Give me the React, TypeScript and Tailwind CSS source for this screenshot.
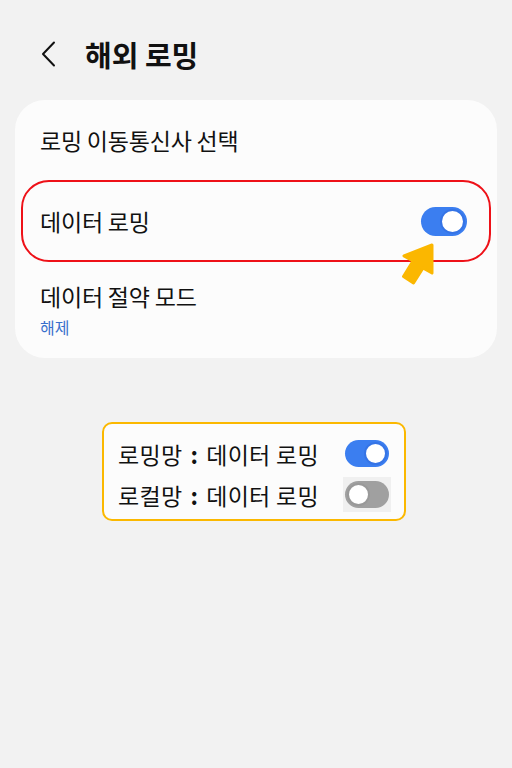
import React from "react";

const font = { fontFamily: '"Noto Sans CJK KR", "Noto Sans", sans-serif' };

function Toggle({ on, size }: { on: boolean; size: "lg" | "sm" }) {
  const track = size === "lg" ? "w-[46px] h-[29px]" : "w-[44px] h-[27px]";
  const knob = size === "lg" ? "w-[25px] h-[25px]" : "w-[23px] h-[23px]";
  return (
    <div
      className={`${track} rounded-full flex items-center px-[2px] ${
        on ? "bg-[#3b7ef0] justify-end" : "bg-[#a0a0a0] justify-start"
      }`}
    >
      <div
        className={`${knob} rounded-full bg-white border-2 ${
          on ? "border-[#3574e6]" : "border-[#999999]"
        }`}
      />
    </div>
  );
}

export default function App() {
  return (
    <div className="min-h-screen w-full bg-[#f2f2f2] text-[#111111]" style={font}>
      {/* Header */}
      <div className="pt-[30px] h-[78px] flex items-center pl-[40px]">
        <svg width="18" height="26" viewBox="0 0 18 26" className="mr-[27px]">
          <path d="M14 1.5 L3 13 L14 24.5" fill="none" stroke="#111" strokeWidth="2" strokeLinecap="round" strokeLinejoin="round" />
        </svg>
        <span className="text-[29px] font-bold leading-[40px]">해외 로밍</span>
      </div>

      {/* Card */}
      <div className="relative mx-[15px] mt-[22px] bg-[#fcfcfc] rounded-[30px] px-[6px]">
        <div className="h-[80px] flex items-center pl-[19px]">
          <span className="text-[23px] leading-[30px] tracking-[-0.2px]">로밍 이동통신사 선택</span>
        </div>
        <div className="h-[82px] flex items-center justify-between pl-[17px] pr-[22px] border-2 border-[#ee1118] rounded-[28px]">
          <span className="text-[23px] leading-[30px] tracking-[-0.2px]">데이터 로밍</span>
          <Toggle on size="lg" />
        </div>
        <div className="pt-[19px] pb-[21px] pl-[19px] flex flex-col gap-[6px]">
          <span className="text-[23px] leading-[30px] tracking-[-0.2px]">데이터 절약 모드</span>
          <span className="text-[16px] leading-[20px] text-[#3a70cc]">해제</span>
        </div>
        {/* Yellow arrow */}
        <svg
          width="38"
          height="46"
          viewBox="0 0 38 46"
          className="absolute left-[385px] top-[142px]"
        >
          <polygon
            points="32,3 4,14 13,19 3.5,34.5 13.5,41 23,26 32,31"
            fill="#fbb700"
            stroke="#fbb700"
            strokeWidth="3"
            strokeLinejoin="round"
          />
        </svg>
      </div>

      {/* Legend box */}
      <div className="mx-auto mt-[64px] w-[304px] h-[99px] border-2 border-[#fbb800] rounded-[10px] bg-[#fcfcfc] pl-[14px] pr-[15px] pt-[9px] translate-x-[-2px]">
        <div className="h-[41px] flex items-center justify-between">
          <span className="text-[23px] leading-[30px] whitespace-pre tracking-[0.3px]">
            로밍망<span className="mx-[8px] font-bold">:</span>데이터 로밍
          </span>
          <Toggle on size="sm" />
        </div>
        <div className="h-[41px] flex items-center justify-between">
          <span className="text-[23px] leading-[30px] whitespace-pre tracking-[0.3px]">
            로컬망<span className="mx-[8px] font-bold">:</span>데이터 로밍
          </span>
          <div className="bg-[#f0f0f0] px-[2px] py-[4px] -mr-[2px]">
            <Toggle on={false} size="sm" />
          </div>
        </div>
      </div>
    </div>
  );
}
